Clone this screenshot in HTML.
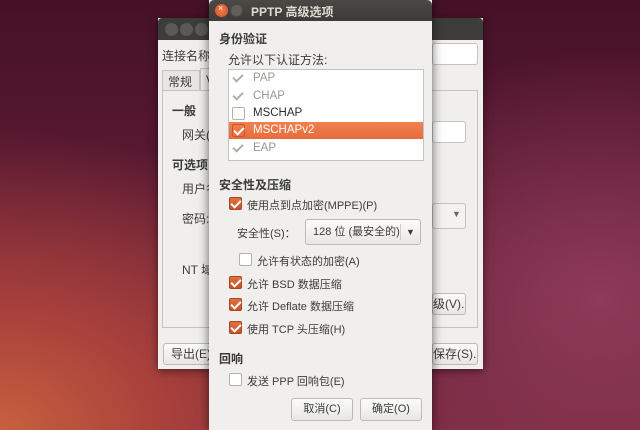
<!DOCTYPE html>
<html><head><meta charset="utf-8"><style>
*{box-sizing:border-box;margin:0;padding:0}
body{width:640px;height:430px;overflow:hidden;position:relative;font-family:"Liberation Sans","Noto Sans CJK SC",sans-serif;font-size:11px;color:#3c3c3c;
background:radial-gradient(ellipse 420px 300px at 0px 430px,#c8603e 0%,#a8403c 40%,transparent 100%),radial-gradient(ellipse 300px 250px at 600px 300px,#8e3a58 0%,transparent 100%),linear-gradient(180deg,#461126 0%,#5a1a33 45%,#7a2a40 100%)}
.abs{position:absolute;white-space:nowrap}
.win{position:absolute;left:158px;top:18px;width:325px;height:351px;background:#f0efed;box-shadow:0 2px 8px rgba(0,0,0,.5)}
.wt{position:absolute;left:0;top:0;width:100%;height:22px;background:#3d3c38;border-radius:4px 4px 0 0}
.entry{position:absolute;background:#fff;border:1px solid #c6c3be;border-radius:3px}
.btn{position:absolute;border:1px solid #bdb9b3;border-radius:3px;background:linear-gradient(#fbfbfa,#e9e7e4);text-align:center;line-height:20px;color:#3c3c3c;white-space:nowrap;overflow:hidden}
.dlg{position:absolute;left:209px;top:0;width:223px;height:430px;background:#f0efed;box-shadow:0 0 10px rgba(0,0,0,.6)}
.dt{position:absolute;left:0;top:0;width:100%;height:21px;background:linear-gradient(#4a4945,#3c3b37);border-radius:5px 5px 0 0}
b{font-weight:bold;color:#3c3c3c}
.cb{position:absolute;width:13px;height:13px;border:1px solid #b5b2ad;border-radius:2px;background:#fff}
.cbo{position:absolute;width:13px;height:13px;border-radius:2px;background:linear-gradient(#e2703f,#c4532a);border:1px solid #a9461f}
.cbo:after,.chk:after{content:"";position:absolute;left:3px;top:0px;width:4px;height:8px;border:solid #fff;border-width:0 2px 2px 0;transform:rotate(45deg)}
.chk{position:absolute;width:13px;height:13px}
.chk.g:after{border-color:#b0aeab}
.l{font-size:11.5px}
</style></head><body>

<div class="win">
 <div class="wt">
  <div class="abs" style="left:7px;top:5px;width:13px;height:13px;border-radius:50%;background:#5a5955"></div>
  <div class="abs" style="left:22px;top:5px;width:13px;height:13px;border-radius:50%;background:#5a5955"></div>
  <div class="abs" style="left:37px;top:5px;width:13px;height:13px;border-radius:50%;background:#5a5955"></div>
 </div>
 <div class="abs" style="left:4px;top:29px;font-size:12px">连接名称(</div>
 <div class="entry" style="left:274px;top:25px;width:46px;height:22px"></div>
 <div class="abs" style="left:4px;top:52px;width:38px;height:20px;border:1px solid #c6c3be;border-bottom:none;background:#e8e6e3"></div>
 <div class="abs" style="left:10px;top:55px;font-size:12px">常规</div>
 <div class="abs" style="left:42px;top:50px;width:20px;height:23px;border:1px solid #c6c3be;border-bottom:none;background:#f0efed"></div>
 <div class="abs" style="left:48px;top:55px;font-size:12px">V</div>
 <div class="abs" style="left:4px;top:72px;width:316px;height:238px;border:1px solid #c6c3be"></div>
 <div class="abs" style="left:14px;top:84px;font-size:12px"><b>一般</b></div>
 <div class="abs" style="left:24px;top:108px;font-size:12px">网关(</div>
 <div class="entry" style="left:274px;top:103px;width:34px;height:22px"></div>
 <div class="abs" style="left:14px;top:138px;font-size:12px"><b>可选项</b></div>
 <div class="abs" style="left:24px;top:162px;font-size:12px">用户名</div>
 <div class="abs" style="left:24px;top:192px;font-size:12px">密码:</div>
 <div class="entry" style="left:274px;top:185px;width:34px;height:26px;background:#f3f2f0"><span class="abs" style="left:19px;top:5px;font-size:9px;color:#666">▼</span></div>
 <div class="abs" style="left:24px;top:243px;font-size:12px">NT 域</div>
 <div class="btn" style="left:274px;top:275px;width:34px;height:22px;font-size:12px;text-align:right;padding-right:4px">级(V)...</div>
 <div class="btn" style="left:5px;top:325px;width:50px;height:22px;font-size:12px;text-align:left;padding-left:7px">导出(E).</div>
 <div class="btn" style="left:274px;top:325px;width:46px;height:22px;font-size:12px;text-align:right;padding-right:6px">保存(S)...</div>
</div>

<div class="dlg">
 <div class="dt">
  <div class="abs" style="left:6px;top:4px;width:13px;height:13px;border-radius:50%;background:radial-gradient(#f27a4d,#d64f25)"><span class="abs" style="left:3px;top:-1px;font-size:9px;color:#fff">×</span></div>
  <div class="abs" style="left:21px;top:4px;width:13px;height:13px;border-radius:50%;background:#605f5b;border:1px solid #4a4945"></div>
  <div class="abs" style="left:42px;top:3px;font-size:12px;font-weight:bold;color:#dfdbd2">PPTP 高级选项</div>
 </div>
 <div class="abs" style="left:10px;top:30px;font-size:12px"><b>身份验证</b></div>
 <div class="abs" style="left:19px;top:51px;font-size:12px">允许以下认证方法:</div>
 <div class="abs" style="left:19px;top:69px;width:196px;height:92px;background:#fff;border:1px solid #c6c3be"></div>
 <div class="abs" style="left:20px;top:122px;width:194px;height:17px;background:linear-gradient(#f08050,#e86c3c)"></div>
 <div class="chk g" style="left:23px;top:72px"></div><div class="abs l" style="left:44px;top:72px;color:#9a9895">PAP</div>
 <div class="chk g" style="left:23px;top:90px"></div><div class="abs l" style="left:44px;top:90px;color:#9a9895">CHAP</div>
 <div class="cb" style="left:23px;top:107px"></div><div class="abs l" style="left:44px;top:107px;color:#2d2d2d">MSCHAP</div>
 <div class="cb" style="left:23px;top:124px;border-color:#c9572c;background:transparent"><div class="chk" style="left:0;top:0"></div></div><div class="abs l" style="left:44px;top:124px;color:#fff">MSCHAPv2</div>
 <div class="chk g" style="left:23px;top:142px"></div><div class="abs l" style="left:44px;top:142px;color:#9a9895">EAP</div>

 <div class="abs" style="left:10px;top:176px;font-size:12px"><b>安全性及压缩</b></div>
 <div class="cbo" style="left:20px;top:197px"></div><div class="abs" style="left:38px;top:197px">使用点到点加密(MPPE)(P)</div>
 <div class="abs" style="left:28px;top:225px">安全性(S)：</div>
 <div class="btn" style="left:96px;top:219px;width:116px;height:26px;line-height:24px;text-align:left;padding-left:7px">128 位 (最安全的)<span class="abs" style="left:94px;top:4px;width:1px;height:16px;background:#d0cdc8"></span><span class="abs" style="left:100px;top:0;font-size:9px">▼</span></div>
 <div class="cb" style="left:30px;top:253px"></div><div class="abs" style="left:48px;top:253px">允许有状态的加密(A)</div>
 <div class="cbo" style="left:20px;top:276px"></div><div class="abs" style="left:38px;top:276px">允许 BSD 数据压缩</div>
 <div class="cbo" style="left:20px;top:298px"></div><div class="abs" style="left:38px;top:298px">允许 Deflate 数据压缩</div>
 <div class="cbo" style="left:20px;top:321px"></div><div class="abs" style="left:38px;top:321px">使用 TCP 头压缩(H)</div>

 <div class="abs" style="left:10px;top:350px;font-size:12px"><b>回响</b></div>
 <div class="cb" style="left:20px;top:373px"></div><div class="abs" style="left:38px;top:373px">发送 PPP 回响包(E)</div>
 <div class="btn" style="left:82px;top:398px;width:62px;height:23px;line-height:21px">取消(C)</div>
 <div class="btn" style="left:151px;top:398px;width:62px;height:23px;line-height:21px">确定(O)</div>
</div>
</body></html>
